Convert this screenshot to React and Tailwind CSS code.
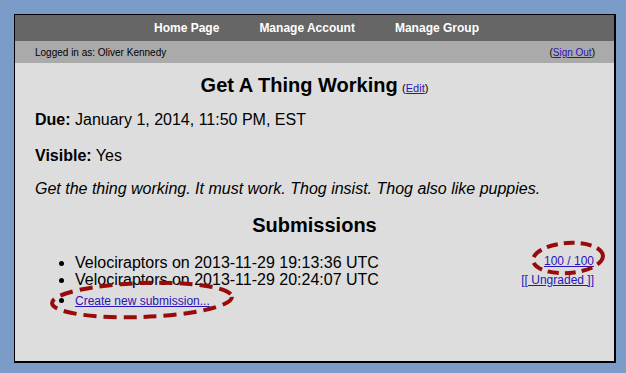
export default function App() {
  const font = { fontFamily: '"Liberation Sans", Arial, Helvetica, sans-serif' };
  return (
    <div className="relative w-[626px] h-[373px] bg-[#7b9bc8] pt-[14px] pl-[14px] overflow-hidden" style={font}>
      <div className="w-[602px] h-[349px] bg-[#dddddd] border-l border-t border-r-2 border-b-2 border-black flex flex-col">
        <div className="h-[26px] bg-[#666666] flex justify-center items-center gap-[40px] pl-[4px] text-white font-bold text-[12px]">
          <span>Home Page</span>
          <span>Manage Account</span>
          <span>Manage Group</span>
        </div>
        <div className="h-[22px] bg-[#aaaaaa] flex justify-between items-center pl-[20px] pr-[19px] text-[10px] text-black">
          <span>Logged in as: Oliver Kennedy</span>
          <span>(<a className="underline text-[#2b14b8]">Sign Out</a>)</span>
        </div>
        <div className="px-[20px] text-black">
          <div className="mt-[10px] text-center leading-[24px]">
            <span className="text-[20px] font-bold">Get A Thing Working</span>{" "}
            <span className="text-[11px]">(<a className="underline text-[#2b14b8]">Edit</a>)</span>
          </div>
          <p className="mt-[10px] text-[16px] leading-[20px]"><b>Due:</b> January 1, 2014, 11:50 PM, EST</p>
          <p className="mt-[16px] text-[16px] leading-[20px]"><b>Visible:</b> Yes</p>
          <p className="mt-[13px] text-[16px] leading-[20px] italic">Get the thing working. It must work. Thog insist. Thog also like puppies.</p>
          <div className="mt-[14px] text-center text-[20px] font-bold leading-[24px]">Submissions</div>
          <ul className="mt-[17px] list-disc pl-[40px] text-[16px] leading-[17px]">
            <li>
              <a className="float-right text-[12px] leading-[15px] underline text-[#2b14b8]">100 / 100</a>
              Velociraptors on 2013-11-29 19:13:36 UTC
            </li>
            <li>
              <a className="float-right text-[12px] leading-[15px] mt-[2px] underline text-[#2b14b8]">[[ Ungraded ]]</a>
              Velociraptors on 2013-11-29 20:24:07 UTC
            </li>
            <li className="mt-[3px]">
              <a className="text-[12px] underline text-[#2b14b8]">Create new submission...</a>
            </li>
          </ul>
        </div>
      </div>
      <svg className="absolute left-0 top-0 pointer-events-none" width="626" height="373">
        <ellipse cx="142" cy="300" rx="90" ry="17" fill="none" stroke="#990a0a" strokeWidth="4" strokeDasharray="13 7" transform="rotate(-2 142 300)" />
        <ellipse cx="568" cy="258" rx="35" ry="15" fill="none" stroke="#990a0a" strokeWidth="4" strokeDasharray="11 6" transform="rotate(-4 568 258)" />
      </svg>
    </div>
  );
}
